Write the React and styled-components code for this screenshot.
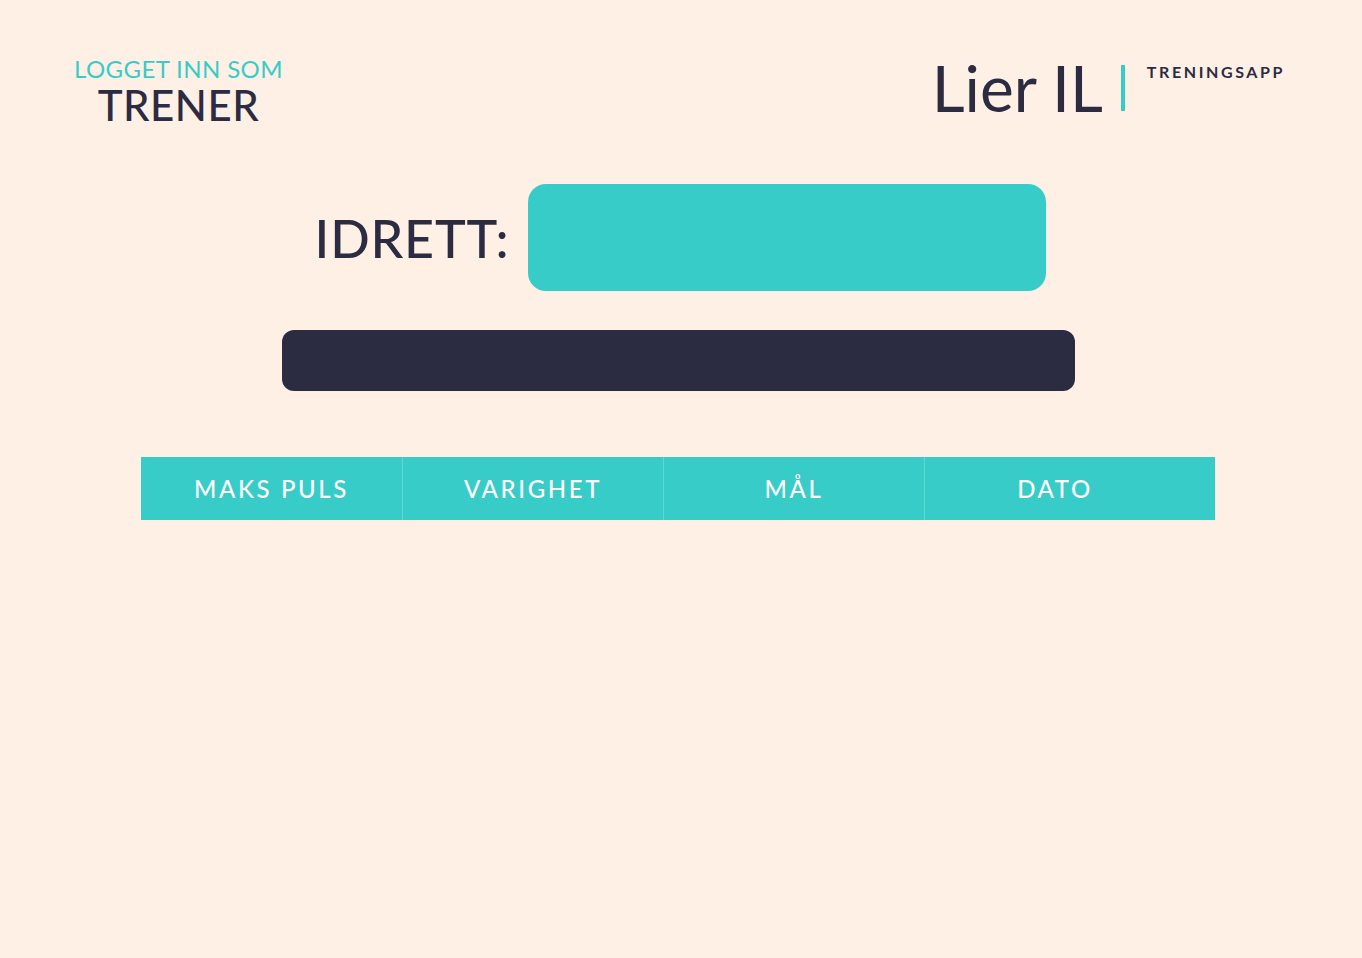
import React from "react";
import styled, { createGlobalStyle } from "styled-components";

const GlobalStyle = createGlobalStyle`
  html, body {
    margin: 0;
    padding: 0;
    background: #fff0e6;
  }
  body {
    font-family: Lato, "Noto Sans", sans-serif;
    color: #2b2b42;
  }
`;

const Page = styled.div`
  min-height: 958px;
  box-sizing: border-box;
  background: #fff0e6;
  padding-top: 56px;
`;

const Header = styled.header`
  display: flex;
  justify-content: space-between;
  align-items: flex-start;
  padding: 0 80px 0 74px;
`;

const UserBlock = styled.div`
  display: flex;
  flex-direction: column;
  align-items: center;
  gap: 3px;
`;

const LoggedIn = styled.span`
  font-size: 24px;
  line-height: 26px;
  color: #38ccc8;
  letter-spacing: 0.4px;
`;

const Role = styled.span`
  font-size: 42px;
  line-height: 40px;
  font-weight: 500;
  letter-spacing: 0.5px;
`;

const Brand = styled.div`
  display: flex;
  align-items: flex-start;
`;

const ClubName = styled.span`
  font-size: 64px;
  line-height: 64px;
  font-weight: 400;
  margin-left: 4px;
`;

const Divider = styled.span`
  width: 4px;
  height: 46px;
  background: #38ccc8;
  margin: 9px 22px 0 18px;
`;

const AppName = styled.span`
  font-size: 16px;
  line-height: 16px;
  font-weight: 700;
  letter-spacing: 2.6px;
  margin-top: 8px;
  margin-right: -3px;
`;

const Main = styled.main`
  display: flex;
  flex-direction: column;
  align-items: center;
  margin-top: 59px;
`;

const SportRow = styled.div`
  display: flex;
  align-items: center;
  gap: 19px;
  margin-left: -1px;
`;

const SportLabel = styled.h1`
  margin: 0;
  font-size: 52px;
  font-weight: 500;
  letter-spacing: 0.8px;
  line-height: 1;
`;

const SportBox = styled.div`
  width: 518px;
  height: 107px;
  background: #38ccc8;
  border-radius: 18px;
`;

const DarkBar = styled.div`
  width: 793px;
  height: 61px;
  background: #2b2b42;
  border-radius: 12px;
  margin-top: 39px;
  margin-left: -6px;
`;

const Table = styled.div`
  display: grid;
  grid-template-columns: repeat(4, 261px);
  width: 1074px;
  height: 63px;
  margin-top: 66px;
  margin-left: -6px;
  background: #38ccc8;
`;

const HeadCell = styled.div`
  display: flex;
  align-items: center;
  justify-content: center;
  color: #fff;
  font-size: 24px;
  font-weight: 500;
  letter-spacing: 2.6px;
  border-left: ${(p) => (p.first ? "none" : "1px solid #5ed8d3")};
`;

const columns = ["MAKS PULS", "VARIGHET", "MÅL", "DATO"];

export default function App() {
  return (
    <>
      <GlobalStyle />
      <Page>
        <Header>
          <UserBlock>
            <LoggedIn>LOGGET INN SOM</LoggedIn>
            <Role>TRENER</Role>
          </UserBlock>
          <Brand>
            <ClubName>Lier IL</ClubName>
            <Divider />
            <AppName>TRENINGSAPP</AppName>
          </Brand>
        </Header>
        <Main>
          <SportRow>
            <SportLabel>IDRETT:</SportLabel>
            <SportBox />
          </SportRow>
          <DarkBar />
          <Table>
            {columns.map((c, i) => (
              <HeadCell key={c} first={i === 0}>
                {c}
              </HeadCell>
            ))}
          </Table>
        </Main>
      </Page>
    </>
  );
}
